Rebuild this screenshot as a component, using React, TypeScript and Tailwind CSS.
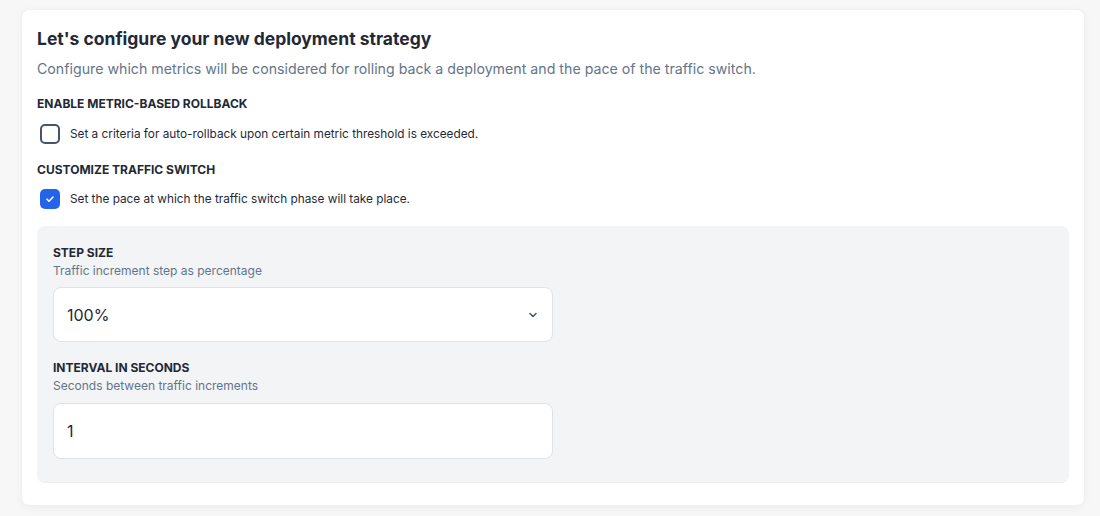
import React from "react";

export default function App() {
  return (
    <div className="min-h-[516px] w-[1100px] bg-[#f7f7f8] pt-[9px] pl-[21px]" style={{ fontFamily: "Inter, 'Noto Sans', sans-serif" }}>
      <div className="w-[1064px] h-[497px] rounded-lg bg-white border border-[#eef0f2] shadow-[0_2px_10px_rgba(0,0,0,0.04)] px-[15px] pt-[15px]">
        <h1 className="text-[17.5px] leading-[28px] font-bold text-[#1f2937]">Let's configure your new deployment strategy</h1>
        <p className="mt-[6px] text-[14.2px] leading-[20px] text-[#64748b]">Configure which metrics will be considered for rolling back a deployment and the pace of the traffic switch.</p>

        <div className="mt-[17px] text-[12px] leading-[16px] font-bold text-[#1f2937] uppercase">Enable metric-based rollback</div>
        <div className="mt-[12px] flex items-center">
          <div className="ml-[3px] w-[20px] h-[20px] rounded-[5px] border-2 border-[#475569] bg-white"></div>
          <span className="ml-[10px] text-[11.8px] leading-[16px] text-[#1f2937]">Set a criteria for auto-rollback upon certain metric threshold is exceeded.</span>
        </div>

        <div className="mt-[18px] text-[12px] leading-[16px] font-bold text-[#1f2937] uppercase">Customize traffic switch</div>
        <div className="mt-[11px] flex items-center">
          <div className="ml-[3px] w-[20px] h-[20px] rounded-[5px] bg-[#2563eb] flex items-center justify-center">
            <svg width="12" height="12" viewBox="0 0 12 12" fill="none">
              <path d="M3 6.2 L5 8.2 L9 4" stroke="white" strokeWidth="1.6" strokeLinecap="round" strokeLinejoin="round" />
            </svg>
          </div>
          <span className="ml-[10px] text-[11.8px] leading-[16px] text-[#1f2937]">Set the pace at which the traffic switch phase will take place.</span>
        </div>

        <div className="mt-[17px] rounded-lg bg-[#f3f4f6] border-b border-[#eceef1] px-[16px] pt-[19px] pb-[23px]">
          <div className="text-[12px] leading-[16px] font-bold text-[#1f2937] uppercase">Step size</div>
          <div className="mt-[2px] text-[12px] leading-[16px] text-[#64748b]">Traffic increment step as percentage</div>
          <div className="mt-[8px] w-[500px] h-[55px] rounded-lg bg-white border border-[#dfe3e8] flex items-center justify-between pl-[13px] pr-[13px]">
            <span className="text-[16px] text-[#1f2937]">100%</span>
            <svg width="12" height="12" viewBox="0 0 12 12" fill="none">
              <path d="M3 4.5 L6 7.5 L9 4.5" stroke="#475569" strokeWidth="1.5" strokeLinecap="round" strokeLinejoin="round" />
            </svg>
          </div>

          <div className="mt-[18px] text-[12px] leading-[16px] font-bold text-[#1f2937] uppercase">Interval in seconds</div>
          <div className="mt-[2px] text-[12px] leading-[16px] text-[#64748b]">Seconds between traffic increments</div>
          <div className="mt-[9px] w-[500px] h-[56px] rounded-lg bg-white border border-[#dfe3e8] flex items-center pl-[13px]">
            <span className="text-[16px] text-[#1f2937]">1</span>
          </div>
        </div>
      </div>
    </div>
  );
}
